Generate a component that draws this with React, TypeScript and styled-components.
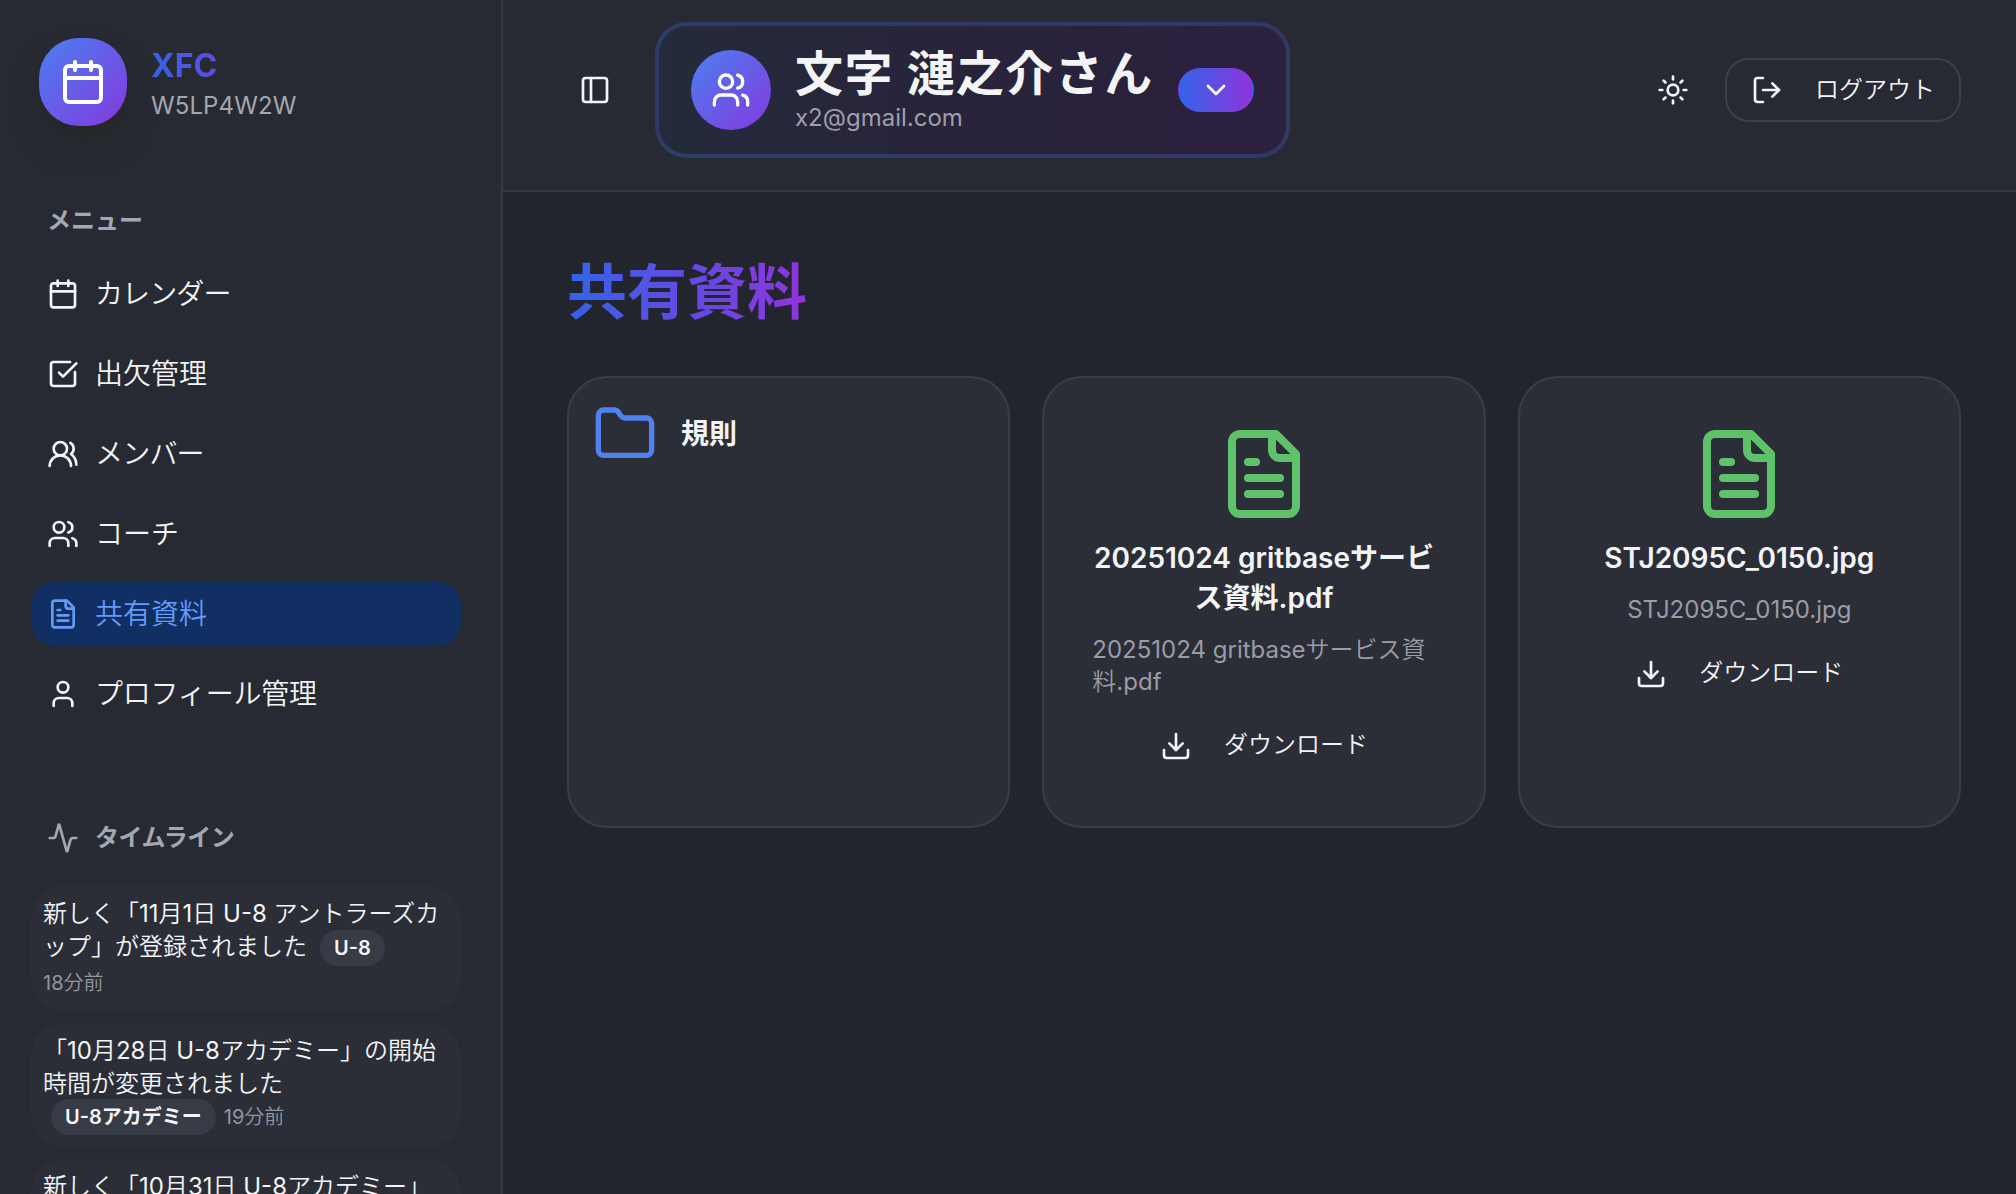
import React from "react";
import styled, { createGlobalStyle } from "styled-components";
import {
  Activity,
  Calendar,
  ChevronDown,
  Download,
  Folder,
  LogOut,
  PanelLeft,
  SquareCheckBig,
  Sun,
  User,
  Users,
  UsersRound,
} from "lucide-react";

const GlobalStyle = createGlobalStyle`
  *, *::before, *::after { box-sizing: border-box; }
  body {
    margin: 0;
    background: #22252d;
    color: #f3f4f6;
    font-family: Inter, "Noto Sans CJK JP DemiLight", "Noto Sans CJK JP", sans-serif;
    text-spacing-trim: space-all;
    overflow: hidden;
  }
  svg { display: block; flex-shrink: 0; }
  h1, h2, h3, p { margin: 0; }
  h1, h2, h3 { font-family: Inter, "Noto Sans CJK JP", sans-serif; }
  button { font: inherit; color: inherit; background: none; border: 0; padding: 0; }
`;

const Page = styled.div`
  display: flex;
  height: 1194px;
  overflow: hidden;
`;

const Sidebar = styled.aside`
  width: 503px;
  flex-shrink: 0;
  padding: 38px 40px 0 31px;
  background: #272a32;
  border-right: 2px solid #363943;
  overflow: hidden;
`;

const Brand = styled.div`
  display: flex;
  align-items: center;
  gap: 24px;
  height: 88px;
  padding-left: 8px;
`;

const BrandMark = styled.div`
  display: grid;
  place-items: center;
  width: 88px;
  height: 88px;
  border-radius: 40px;
  color: #fff;
  background: linear-gradient(135deg, #4b80f0, #8438de);
  box-shadow: 0 20px 30px -6px rgba(38, 38, 36, 0.6), 0 8px 12px -8px rgba(30, 30, 30, 0.5);
`;

const BrandText = styled.div`
  padding-top: 8px;
`;

const BrandName = styled.div`
  font-size: 32px;
  line-height: 40px;
  font-weight: 700;
  color: transparent;
  background: linear-gradient(90deg, #3463e9, #9034db);
  background-clip: text;
`;

const BrandCode = styled.div`
  font-size: 24px;
  line-height: 40px;
  letter-spacing: 0.1px;
  color: #a3a7b0;
`;

const SectionLabel = styled.h2<{ $top: number; $tracking?: number }>`
  display: flex;
  align-items: center;
  gap: 16px;
  height: 64px;
  margin-top: ${(p) => p.$top}px;
  padding-left: 16px;
  font-size: 24px;
  font-weight: 600;
  letter-spacing: ${(p) => p.$tracking ?? 0}px;
  color: #a3a7b0;

  span { margin-top: -5px; }
`;

const Nav = styled.nav`
  display: flex;
  flex-direction: column;
  gap: 16px;
  margin-top: 9px;
`;

const NavItem = styled.a<{ $active?: boolean; $tracking?: number }>`
  display: flex;
  align-items: center;
  gap: 16px;
  height: 64px;
  padding: 0 16px;
  border-radius: 24px;
  font-size: 28px;
  letter-spacing: ${(p) => p.$tracking ?? 0}px;
  color: ${(p) => (p.$active ? "#629cf8" : "#f3f4f6")};
  background: ${(p) => (p.$active ? "#112f63" : "transparent")};

  span { margin-top: -5px; }
`;

const Feed = styled.div`
  display: flex;
  flex-direction: column;
  gap: 12px;
  margin-top: 16px;
`;

const FeedCard = styled.article<{ $height: number }>`
  height: ${(p) => p.$height}px;
  flex-shrink: 0;
  padding: 11px 12px 12px;
  border-radius: 32px;
  background: #2b2e36;
  font-size: 24px;
  line-height: 33px;
  white-space: nowrap;
`;

const FeedLine = styled.div`
  display: flex;
  height: 33px;
`;

const FeedMeta = styled.div<{ $indent?: boolean }>`
  display: flex;
  align-items: center;
  gap: 8px;
  height: 36px;
  margin-top: ${(p) => (p.$indent ? -1 : 2)}px;
  padding-left: ${(p) => (p.$indent ? 8 : 0)}px;
`;

const Tag = styled.span`
  height: 36px;
  padding: 0 14px;
  border-radius: 18px;
  background: #373b45;
  font-family: Inter, "Noto Sans CJK JP", sans-serif;
  font-size: 20px;
  line-height: 36px;
  font-weight: 600;
`;

const InlineTag = styled(Tag)`
  margin-left: 13px;
`;

const Ago = styled.span`
  font-size: 20px;
  color: #9296a0;
`;

const Content = styled.div`
  flex: 1;
  min-width: 0;
`;

const Header = styled.header`
  display: flex;
  align-items: flex-start;
  height: 192px;
  padding: 22px 55px 0 64px;
  background: #272a32;
  border-bottom: 2px solid #363943;
`;

const HeaderRow = styled.div`
  display: flex;
  align-items: center;
  width: 100%;
  height: 136px;
`;

const ToggleButton = styled.button`
  padding: 12px;
  margin-right: 32px;
`;

const Profile = styled.div`
  display: flex;
  align-items: center;
  width: 635px;
  height: 136px;
  padding: 0 32px;
  border: 4px solid rgba(59, 110, 190, 0.32);
  border-radius: 32px;
  background: linear-gradient(90deg, #242a3b, #28233a 50%, #2c203f);
`;

const Avatar = styled.div`
  display: grid;
  place-items: center;
  width: 80px;
  height: 80px;
  margin-right: 24px;
  border-radius: 50%;
  color: #fff;
  background: linear-gradient(135deg, #4b80f0, #8438de);
`;

const ProfileText = styled.div`
  flex: 1;
  white-space: nowrap;
`;

const ProfileName = styled.h2`
  font-size: 48px;
  line-height: 60px;
  font-weight: 700;
  letter-spacing: 1.4px;
`;

const ProfileMail = styled.p`
  font-size: 24px;
  line-height: 28px;
  padding-bottom: 4px;
  color: #a09fab;
`;

const SwitchButton = styled.button`
  display: grid;
  place-items: center;
  width: 76px;
  height: 44px;
  border: 2px solid transparent;
  border-radius: 22px;
  color: #fff;
  background: linear-gradient(90deg, #3463e9, #8f35dc);
`;

const ThemeButton = styled.button`
  margin: 0 36px 0 auto;
`;

const LogoutButton = styled.button`
  display: flex;
  align-items: center;
  gap: 32px;
  height: 64px;
  padding: 0 24px;
  border: 2px solid #3e4046;
  border-radius: 24px;
  font-size: 24px;
  white-space: nowrap;

  span { margin-top: -5px; }
`;

const Main = styled.main`
  padding: 63px 55px 0 64px;
`;

const Title = styled.h1`
  width: max-content;
  font-size: 60px;
  line-height: 75px;
  font-weight: 700;
  color: transparent;
  background: linear-gradient(90deg, #3463e9, #9034db);
  background-clip: text;
`;

const Grid = styled.div`
  display: grid;
  grid-template-columns: repeat(3, 1fr);
  gap: 32px;
  margin-top: 46px;
`;

const Card = styled.section`
  height: 452px;
  min-width: 0;
  border: 2px solid #3a3d48;
  border-radius: 40px;
  background: #2c2e37;
`;

const FolderCard = styled(Card)`
  display: flex;
  align-items: flex-start;
  gap: 24px;
  padding: 24px;
`;

const FileCard = styled(Card)`
  display: flex;
  flex-direction: column;
  align-items: center;
  padding: 48px;
`;

const FolderName = styled.h3`
  font-size: 28px;
  line-height: 64px;
  font-weight: 600;
`;

const FileName = styled.h3`
  margin-top: 16px;
  font-size: 28px;
  line-height: 40px;
  font-weight: 600;
  text-align: center;
`;

const FileNote = styled.p`
  margin-top: 16px;
  font-size: 24px;
  line-height: 32px;
  color: #9a9ca6;
`;

const DownloadButton = styled.button`
  display: flex;
  align-items: center;
  gap: 32px;
  height: 64px;
  margin-top: 16px;
  font-size: 24px;
  white-space: nowrap;

  span { margin-top: -7px; }
`;

function FileIcon({ size, color = "currentColor" }: { size: number; color?: string }) {
  return (
    <svg
      width={size}
      height={size}
      viewBox="0 0 24 24"
      fill="none"
      stroke={color}
      strokeWidth="2"
      strokeLinecap="round"
      strokeLinejoin="round"
    >
      <path d="M15 2H6a2 2 0 0 0-2 2v16a2 2 0 0 0 2 2h12a2 2 0 0 0 2-2V7Z" />
      <path d="M14 2v4a2 2 0 0 0 2 2h4" />
      <path d="M10 9H8" />
      <path d="M16 13H8" />
      <path d="M16 17H8" />
    </svg>
  );
}

const navItems = [
  { label: "カレンダー", icon: <Calendar size={32} />, tracking: -0.9 },
  { label: "出欠管理", icon: <SquareCheckBig size={32} /> },
  { label: "メンバー", icon: <UsersRound size={32} />, tracking: -0.8 },
  { label: "コーチ", icon: <Users size={32} /> },
  { label: "共有資料", icon: <FileIcon size={32} />, active: true },
  { label: "プロフィール管理", icon: <User size={32} />, tracking: -0.2 },
];

const files = [
  { title: "20251024 gritbaseサービス資料.pdf", note: "20251024 gritbaseサービス資料.pdf" },
  { title: "STJ2095C_0150.jpg", note: "STJ2095C_0150.jpg" },
];

export default function App() {
  return (
    <>
      <GlobalStyle />
      <Page>
        <Sidebar>
          <Brand>
            <BrandMark>
              <Calendar size={48} />
            </BrandMark>
            <BrandText>
              <BrandName>XFC</BrandName>
              <BrandCode>W5LP4W2W</BrandCode>
            </BrandText>
          </Brand>
          <SectionLabel $top={63}>
            <span>メニュー</span>
          </SectionLabel>
          <Nav>
            {navItems.map((item) => (
              <NavItem key={item.label} $active={item.active} $tracking={item.tracking}>
                {item.icon}
                <span>{item.label}</span>
              </NavItem>
            ))}
          </Nav>
          <SectionLabel $top={80} $tracking={-0.5}>
            <Activity size={32} />
            <span>タイムライン</span>
          </SectionLabel>
          <Feed>
            <FeedCard $height={125}>
              <FeedLine>新しく「11月1日 U-8 アントラーズカ</FeedLine>
              <FeedLine>
                ップ」が登録されました
                <InlineTag>U-8</InlineTag>
              </FeedLine>
              <FeedMeta>
                <Ago>18分前</Ago>
              </FeedMeta>
            </FeedCard>
            <FeedCard $height={124}>
              <FeedLine>「10月28日 U-8アカデミー」の開始</FeedLine>
              <FeedLine>時間が変更されました</FeedLine>
              <FeedMeta $indent>
                <Tag>U-8アカデミー</Tag>
                <Ago>19分前</Ago>
              </FeedMeta>
            </FeedCard>
            <FeedCard $height={124}>
              <FeedLine>新しく「10月31日 U-8アカデミー」</FeedLine>
            </FeedCard>
          </Feed>
        </Sidebar>
        <Content>
          <Header>
            <HeaderRow>
              <ToggleButton>
                <PanelLeft size={32} />
              </ToggleButton>
              <Profile>
                <Avatar>
                  <Users size={40} />
                </Avatar>
                <ProfileText>
                  <ProfileName>文字 漣之介さん</ProfileName>
                  <ProfileMail>x2@gmail.com</ProfileMail>
                </ProfileText>
                <SwitchButton>
                  <ChevronDown size={32} />
                </SwitchButton>
              </Profile>
              <ThemeButton>
                <Sun size={32} />
              </ThemeButton>
              <LogoutButton>
                <LogOut size={32} />
                <span>ログアウト</span>
              </LogoutButton>
            </HeaderRow>
          </Header>
          <Main>
            <Title>共有資料</Title>
            <Grid>
              <FolderCard>
                <Folder size={64} color="#4f82ee" />
                <FolderName>規則</FolderName>
              </FolderCard>
              {files.map((file) => (
                <FileCard key={file.title}>
                  <FileIcon size={96} color="#5dc269" />
                  <FileName>{file.title}</FileName>
                  <FileNote>{file.note}</FileNote>
                  <DownloadButton>
                    <Download size={32} />
                    <span>ダウンロード</span>
                  </DownloadButton>
                </FileCard>
              ))}
            </Grid>
          </Main>
        </Content>
      </Page>
    </>
  );
}
